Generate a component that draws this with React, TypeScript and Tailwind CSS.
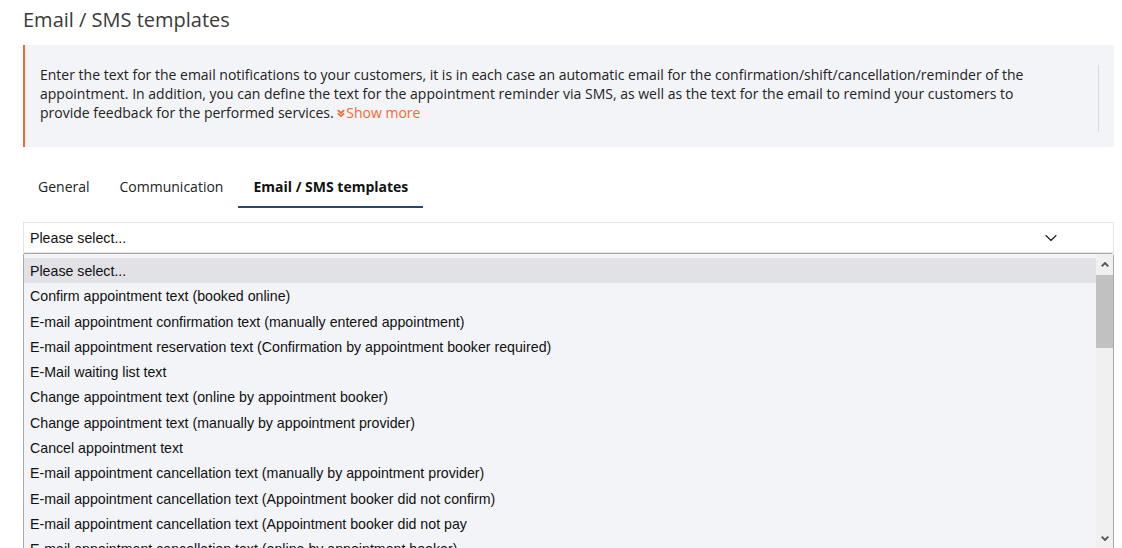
import { ChevronDown } from 'lucide-react';

const options = [
  'Please select...',
  'Confirm appointment text (booked online)',
  'E-mail appointment confirmation text (manually entered appointment)',
  'E-mail appointment reservation text (Confirmation by appointment booker required)',
  'E-Mail waiting list text',
  'Change appointment text (online by appointment booker)',
  'Change appointment text (manually by appointment provider)',
  'Cancel appointment text',
  'E-mail appointment cancellation text (manually by appointment provider)',
  'E-mail appointment cancellation text (Appointment booker did not confirm)',
  'E-mail appointment cancellation text (Appointment booker did not pay',
  'E-mail appointment cancellation text (online by appointment booker)',
];

const tabs = ['General', 'Communication', 'Email / SMS templates'];

export default function App() {
  return (
    <div className="h-[548px] w-[1122px] overflow-hidden bg-white font-['Open_Sans',sans-serif] text-[#333]">
      <div className="pl-[23px] pr-[8px]">
        {/* page title */}
        <h1 className="pt-[5px] text-[20px] leading-[30px] text-[#3a3a3a]">Email / SMS templates</h1>

        {/* info box */}
        <div className="mt-[10px] flex h-[102px] border-l-2 border-[#f26a2e] bg-[#f3f4f8] pr-[15px]">
          <p className="flex-1 pl-[15px] pt-[20px] pr-[70px] text-[14px] leading-[19px] text-[#222]">
            Enter the text for the email notifications to your customers, it is in each case an automatic email for the confirmation/shift/cancellation/reminder of the appointment. In addition, you can define the text for the appointment reminder via SMS, as well as the text for the email to remind your customers to provide feedback for the performed services.{' '}
            <span className="text-[#f26a2e]">
              <svg viewBox="0 0 10 10" className="mr-[1px] inline-block h-[10px] w-[8px] align-[0px]" fill="none" stroke="#f26a2e" strokeWidth="2.2">
                <path d="M1 1.5 5 5 9 1.5M1 5.5 5 9 9 5.5" />
              </svg>
              Show more
            </span>
          </p>
          <div className="mt-[20px] h-[67px] w-px bg-[#d9dadf]" />
        </div>

        {/* tabs */}
        <div className="mt-[26px] flex h-[35px] text-[14px]">
          {tabs.map((t, i) => (
            <div
              key={t}
              className={`flex items-start px-[15px] pt-[3px] ${
                i === 2 ? 'border-b-2 border-[#2a4373] font-bold text-[#111]' : 'text-[#222]'
              }`}
            >
              {t}
            </div>
          ))}
        </div>

        {/* select */}
        <div className="mt-[14px] flex h-[31px] w-[1091px] items-center border border-[#e4e4e4] pl-[6px] pr-[52px] font-['Liberation_Sans',sans-serif] text-[14.2px] text-[#111]">
          <span className="flex-1 pt-[2px]">Please select...</span>
          <ChevronDown size={20} strokeWidth={1.4} className="text-[#222]" />
        </div>

        {/* open list */}
        <div className="flex h-[300px] w-[1091px] rounded-tr-[3px] rounded-tl-[2px] border border-[#a9a9a9] bg-[#f3f4f8] font-['Liberation_Sans',sans-serif] text-[14.2px] text-[#111]">
          <ul className="flex-1 pt-[4px]">
            {options.map((o, i) => (
              <li
                key={o}
                className={`flex h-[25.3px] items-center pl-[6px] pt-[2px] ${i === 0 ? 'bg-[#e1e1e6]' : ''}`}
              >
                {o}
              </li>
            ))}
          </ul>
          <div className="flex w-[17px] flex-col bg-[#f0f0f0]">
            <div className="flex h-[21px] items-center justify-center">
              <svg viewBox="0 0 8 5" className="h-[5px] w-[8px]" fill="none" stroke="#505050" strokeWidth="1.8">
                <path d="M0.7 4.3 4 1 7.3 4.3" />
              </svg>
            </div>
            <div className="h-[73px] bg-[#c1c1c1]" />
            <div className="flex-1" />
            <div className="flex h-[21px] items-center justify-center pb-[6px]">
              <svg viewBox="0 0 8 5" className="h-[5px] w-[8px]" fill="none" stroke="#505050" strokeWidth="1.8">
                <path d="M0.7 0.7 4 4 7.3 0.7" />
              </svg>
            </div>
          </div>
        </div>
      </div>
    </div>
  );
}
